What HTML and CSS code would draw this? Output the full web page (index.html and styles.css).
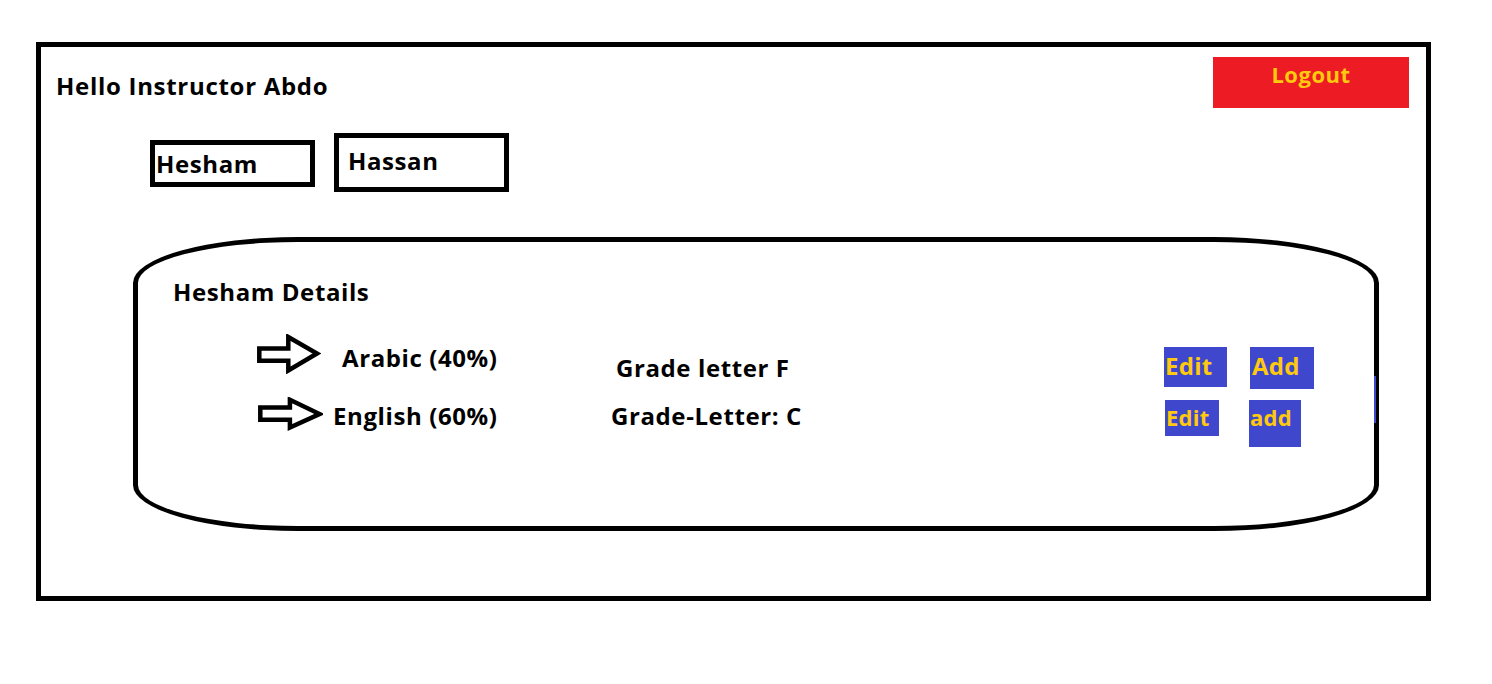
FILE: index.html
```html
<!DOCTYPE html>
<html lang="en">
<head>
<meta charset="utf-8">
<title>Instructor</title>
<link rel="stylesheet" href="styles.css">
</head>
<body>
<div class="frame">
  <header class="header">
    <h1 class="greeting">Hello Instructor Abdo</h1>
    <button class="logout">Logout</button>
  </header>
  <nav class="tabs">
    <div class="tab tab-hesham">Hesham</div>
    <div class="tab tab-hassan">Hassan</div>
  </nav>
  <section class="details">
    <h2 class="details-title">Hesham Details</h2>
    <div class="row row-1">
      <svg class="arrow arrow-1" width="64" height="40" viewBox="0 0 64 40"><path d="M2.3,14.5 H31.3 V3 L60,19.5 L31.3,36.5 V26.8 H2.3 Z" fill="none" stroke="#000" stroke-width="4.5" stroke-linejoin="miter" stroke-miterlimit="3"/></svg>
      <span class="subject subject-1">Arabic (40%)</span>
      <span class="grade grade-1">Grade letter F</span>
      <button class="btn btn-edit-1">Edit</button>
      <button class="btn btn-add-1">Add</button>
    </div>
    <div class="row row-2">
      <svg class="arrow arrow-2" width="65" height="34" viewBox="0 0 65 34"><path d="M2.3,10.5 H31.9 V2.8 L61.5,17 L31.9,30.5 V22.8 H2.3 Z" fill="none" stroke="#000" stroke-width="4.5" stroke-linejoin="miter" stroke-miterlimit="3"/></svg>
      <span class="subject subject-2">English (60%)</span>
      <span class="grade grade-2">Grade-Letter: C</span>
      <button class="btn btn-small btn-edit-2">Edit</button>
      <button class="btn btn-small btn-add-2">add</button>
    </div>
    <span class="sliver"></span>
  </section>
</div>
</body>
</html>
```

FILE: styles.css
```css
* { box-sizing: border-box; }
html, body { margin: 0; padding: 0; background: #fff; }
body {
  font-family: "Open Sans", "Noto Sans", "Liberation Sans", sans-serif;
  font-weight: 700;
  color: #000;
  width: 1492px;
  height: 684px;
  overflow: hidden;
  letter-spacing: 0.6px;
}
.frame {
  margin: 42px 0 0 36px;
  width: 1395px;
  height: 559px;
  border: 5px solid #000;
}
.header {
  display: flex;
  justify-content: space-between;
  align-items: flex-start;
  padding: 10px 17px 0 15px;
}
.greeting {
  margin: 13px 0 0 0;
  font-size: 24px;
  line-height: 32px;
  font-weight: 700;
  letter-spacing: 0.7px;
}
.logout {
  width: 196px;
  height: 51px;
  background: #ed1c24;
  color: #ffc90e;
  border: none;
  padding: 2px 0 0 0;
  font-family: inherit;
  font-weight: 700;
  font-size: 22px;
  line-height: 30px;
  letter-spacing: 0.5px;
  display: flex;
  justify-content: center;
  align-items: flex-start;
}
.tabs {
  display: flex;
  align-items: flex-start;
  gap: 19px;
  margin-top: 25px;
  padding-left: 109px;
}
.tab {
  border: 5px solid #000;
  font-size: 24px;
  line-height: 32px;
}
.tab-hesham {
  width: 165px;
  height: 47px;
  margin-top: 7px;
  padding: 3px 0 0 1px;
}
.tab-hassan {
  width: 175px;
  height: 59px;
  padding: 7px 0 0 9px;
}
.details {
  position: relative;
  margin: 45px 0 0 92px;
  width: 1246px;
  height: 294px;
  border: 5px solid #000;
  border-radius: 165px / 46px;
  padding: 34px 0 0 0;
}
.details-title {
  margin: 0 0 0 35px;
  font-size: 24px;
  line-height: 32px;
  font-weight: 700;
}
.row {
  display: grid;
  grid-template-columns: 76px 279px 552px 85px auto;
  align-items: start;
  padding-left: 119px;
  font-size: 24px;
  line-height: 32px;
}
.row-1 { margin-top: 26px; }
.row-2 { margin-top: 8px; }
.arrow { display: block; }
.arrow-2 { margin-left: 1px; }
.subject-1 { margin: 8px 0 0 9px; }
.grade-1 { margin: 18px 0 0 4px; }
.subject-2 { margin: 3px 0 0 0; }
.grade-2 { margin: 3px 0 0 -1px; }
.btn {
  display: flex;
  align-items: flex-start;
  justify-content: flex-start;
  background: #3f48cc;
  color: #ffc90e;
  border: none;
  font-family: inherit;
  font-weight: 700;
  font-size: 24px;
  line-height: 32px;
  letter-spacing: 0.3px;
  padding: 3px 0 0 1px;
}
.btn-small {
  font-size: 22px;
  line-height: 30px;
  padding: 2px 0 0 1px;
}
.btn-edit-1 { width: 63px; height: 40px; margin-top: 13px; }
.btn-add-1 { width: 64px; height: 42px; margin: 13px 0 0 1px; padding-left: 2px; }
.btn-edit-2 { width: 54px; height: 36px; margin: 3px 0 0 1px; }
.btn-add-2 { width: 52px; height: 47px; margin-top: 3px; }
.sliver {
  position: absolute;
  left: 1236px;
  top: 134px;
  width: 2px;
  height: 47px;
  background: #3f48cc;
}
```
